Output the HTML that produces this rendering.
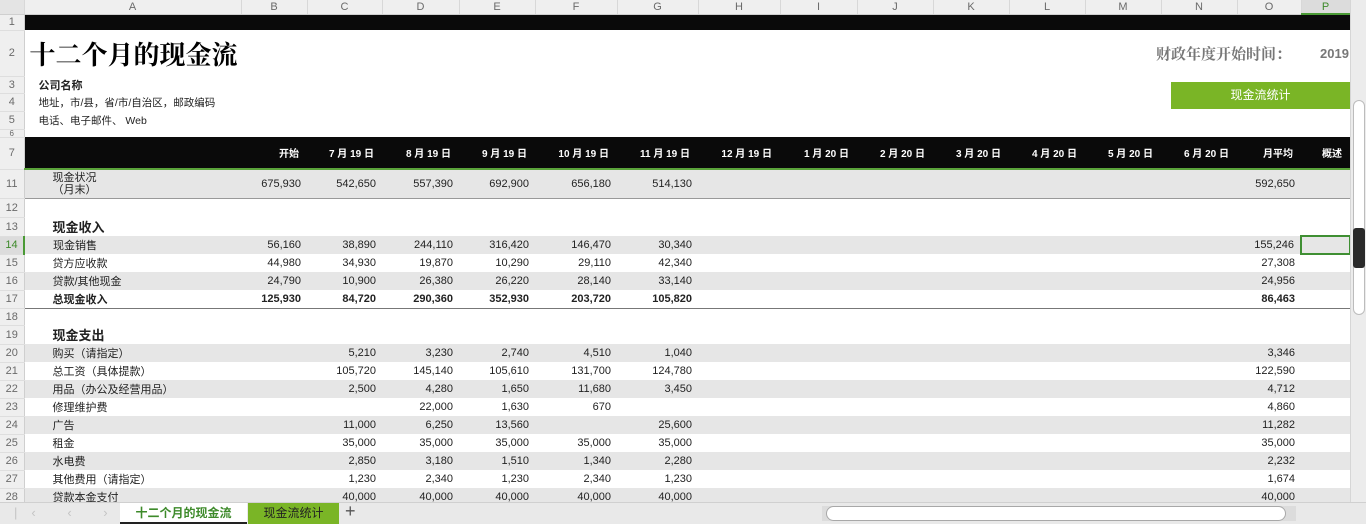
<!DOCTYPE html>
<html><head><meta charset="utf-8"><style>
*{margin:0;padding:0;box-sizing:border-box}
body{width:1366px;height:524px;overflow:hidden;background:#fff;font-family:"Liberation Sans","Noto Sans CJK SC",sans-serif;font-size:11px;color:#222;position:relative}
table{border-collapse:collapse;table-layout:fixed;position:absolute;left:0;top:0;width:1350px}
td{padding:0;white-space:nowrap;overflow:hidden;vertical-align:middle}
td.rh{background:#efefef;color:#6a6a6a;text-align:center;border-right:1px solid #cfcfcf;border-bottom:1px solid #dedede;font-size:11px}
tr.ch td{background:#efefef;color:#6a6a6a;text-align:center;border-right:1px solid #d8d8d8;border-bottom:1px solid #cfcfcf;font-size:11px;height:14px}
td.n{text-align:right;padding-right:6px}
tr.g td:not(.rh){background:#e6e6e6}
tr.hd td:not(.rh){background:#0a0a0a;color:#fff;font-weight:bold;font-size:10px;text-align:right;padding-right:8px;border-bottom:2px solid #5aa33a}
.lb{padding-left:28px}
tr.b td{font-weight:bold}
.sec{font-size:13px;font-weight:bold;padding-left:28px;vertical-align:bottom}
</style></head><body>
<table>
<colgroup><col style="width:24px"><col style="width:217px"><col style="width:66px"><col style="width:75px"><col style="width:77px"><col style="width:76px"><col style="width:82px"><col style="width:81px"><col style="width:82px"><col style="width:77px"><col style="width:76px"><col style="width:76px"><col style="width:76px"><col style="width:76px"><col style="width:76px"><col style="width:64px"><col style="width:49px"></colgroup>
<tr class="ch"><td style="background:#e4e4e4"></td><td>A</td><td>B</td><td>C</td><td>D</td><td>E</td><td>F</td><td>G</td><td>H</td><td>I</td><td>J</td><td>K</td><td>L</td><td>M</td><td>N</td><td>O</td><td style="color:#3d8a2a;border-bottom:2px solid #4a9a35;background:#dcdcdc">P</td></tr>
<tr style="height:16px"><td class="rh">1</td><td colspan="16" style="background:#0a0a0a"></td></tr>
<tr style="height:46px"><td class="rh">2</td><td colspan="9" style="font-family:'Liberation Serif','Noto Serif CJK SC',serif;font-size:26px;font-weight:bold;color:#000;padding-left:5px">十二个月的现金流</td><td colspan="6" style="text-align:right;font-size:15px;font-weight:bold;color:#777;padding-right:10px;font-family:'Liberation Serif','Noto Serif CJK SC',serif">财政年度开始时间：</td><td style="font-size:13px;font-weight:bold;color:#777;padding-left:19px">2019</td></tr>
<tr style="height:17px"><td class="rh">3</td><td style="font-weight:bold;padding-left:14px">公司名称</td><td colspan="15"></td></tr>
<tr style="height:18px"><td class="rh">4</td><td style="padding-left:14px;font-size:10.5px">地址，市/县，省/市/自治区，邮政编码</td><td colspan="15"></td></tr>
<tr style="height:18px"><td class="rh">5</td><td style="padding-left:14px;font-size:10.5px">电话、电子邮件、 Web</td><td colspan="15"></td></tr>
<tr style="height:7px"><td class="rh" style="font-size:8px;line-height:7px">6</td><td colspan="16"></td></tr>
<tr class="hd" style="height:32px"><td class="rh">7</td><td></td><td>开始</td><td>7 月 19 日</td><td>8 月 19 日</td><td>9 月 19 日</td><td>10 月 19 日</td><td>11 月 19 日</td><td>12 月 19 日</td><td>1 月 20 日</td><td>2 月 20 日</td><td>3 月 20 日</td><td>4 月 20 日</td><td>5 月 20 日</td><td>6 月 20 日</td><td>月平均</td><td>概述</td></tr>
<tr class="g" style="height:29px"><td class="rh">11</td><td style="padding-left:28px;line-height:12px;border-bottom:1px solid #999">现金状况<br>（月末）</td><td class="n" style="border-bottom:1px solid #999">675,930</td><td class="n" style="border-bottom:1px solid #999">542,650</td><td class="n" style="border-bottom:1px solid #999">557,390</td><td class="n" style="border-bottom:1px solid #999">692,900</td><td class="n" style="border-bottom:1px solid #999">656,180</td><td class="n" style="border-bottom:1px solid #999">514,130</td><td colspan="7" style="border-bottom:1px solid #999"></td><td class="n" style="border-bottom:1px solid #999">592,650</td><td style="border-bottom:1px solid #999"></td></tr>
<tr style="height:19px"><td class="rh">12</td><td colspan="16"></td></tr>
<tr style="height:18px"><td class="rh">13</td><td class="sec">现金收入</td><td colspan="15"></td></tr>
<tr class="g" style="height:18px"><td class="rh" style="color:#3d8a2a;border-right:2px solid #4a9a35;background:#dcdcdc">14</td><td class="lb">现金销售</td><td class="n">56,160</td><td class="n">38,890</td><td class="n">244,110</td><td class="n">316,420</td><td class="n">146,470</td><td class="n">30,340</td><td colspan="7"></td><td class="n">155,246</td><td style="border:2px solid #3f8f33"></td></tr>
<tr style="height:18px"><td class="rh">15</td><td class="lb">贷方应收款</td><td class="n">44,980</td><td class="n">34,930</td><td class="n">19,870</td><td class="n">10,290</td><td class="n">29,110</td><td class="n">42,340</td><td colspan="7"></td><td class="n">27,308</td><td></td></tr>
<tr class="g" style="height:18px"><td class="rh">16</td><td class="lb">贷款/其他现金</td><td class="n">24,790</td><td class="n">10,900</td><td class="n">26,380</td><td class="n">26,220</td><td class="n">28,140</td><td class="n">33,140</td><td colspan="7"></td><td class="n">24,956</td><td></td></tr>
<tr class="b" style="height:18px"><td class="rh" style="font-weight:normal">17</td><td class="lb" style="border-bottom:1px solid #777">总现金收入</td><td class="n" style="border-bottom:1px solid #777">125,930</td><td class="n" style="border-bottom:1px solid #777">84,720</td><td class="n" style="border-bottom:1px solid #777">290,360</td><td class="n" style="border-bottom:1px solid #777">352,930</td><td class="n" style="border-bottom:1px solid #777">203,720</td><td class="n" style="border-bottom:1px solid #777">105,820</td><td colspan="7" style="border-bottom:1px solid #777"></td><td class="n" style="border-bottom:1px solid #777">86,463</td><td style="border-bottom:1px solid #777"></td></tr>
<tr style="height:17px"><td class="rh">18</td><td colspan="16"></td></tr>
<tr style="height:18px"><td class="rh">19</td><td class="sec">现金支出</td><td colspan="15"></td></tr>
<tr class="g" style="height:18px"><td class="rh">20</td><td class="lb">购买（请指定）</td><td></td><td class="n">5,210</td><td class="n">3,230</td><td class="n">2,740</td><td class="n">4,510</td><td class="n">1,040</td><td colspan="7"></td><td class="n">3,346</td><td></td></tr>
<tr style="height:18px"><td class="rh">21</td><td class="lb">总工资（具体提款）</td><td></td><td class="n">105,720</td><td class="n">145,140</td><td class="n">105,610</td><td class="n">131,700</td><td class="n">124,780</td><td colspan="7"></td><td class="n">122,590</td><td></td></tr>
<tr class="g" style="height:18px"><td class="rh">22</td><td class="lb">用品（办公及经营用品）</td><td></td><td class="n">2,500</td><td class="n">4,280</td><td class="n">1,650</td><td class="n">11,680</td><td class="n">3,450</td><td colspan="7"></td><td class="n">4,712</td><td></td></tr>
<tr style="height:18px"><td class="rh">23</td><td class="lb">修理维护费</td><td></td><td></td><td class="n">22,000</td><td class="n">1,630</td><td class="n">670</td><td></td><td colspan="7"></td><td class="n">4,860</td><td></td></tr>
<tr class="g" style="height:18px"><td class="rh">24</td><td class="lb">广告</td><td></td><td class="n">11,000</td><td class="n">6,250</td><td class="n">13,560</td><td></td><td class="n">25,600</td><td colspan="7"></td><td class="n">11,282</td><td></td></tr>
<tr style="height:18px"><td class="rh">25</td><td class="lb">租金</td><td></td><td class="n">35,000</td><td class="n">35,000</td><td class="n">35,000</td><td class="n">35,000</td><td class="n">35,000</td><td colspan="7"></td><td class="n">35,000</td><td></td></tr>
<tr class="g" style="height:18px"><td class="rh">26</td><td class="lb">水电费</td><td></td><td class="n">2,850</td><td class="n">3,180</td><td class="n">1,510</td><td class="n">1,340</td><td class="n">2,280</td><td colspan="7"></td><td class="n">2,232</td><td></td></tr>
<tr style="height:18px"><td class="rh">27</td><td class="lb">其他费用（请指定）</td><td></td><td class="n">1,230</td><td class="n">2,340</td><td class="n">1,230</td><td class="n">2,340</td><td class="n">1,230</td><td colspan="7"></td><td class="n">1,674</td><td></td></tr>
<tr class="g" style="height:18px"><td class="rh">28</td><td class="lb">贷款本金支付</td><td></td><td class="n">40,000</td><td class="n">40,000</td><td class="n">40,000</td><td class="n">40,000</td><td class="n">40,000</td><td colspan="7"></td><td class="n">40,000</td><td></td></tr>
</table>
<div style="position:absolute;left:1171px;top:82px;width:179px;height:27px;background:#7ab526;color:#fff;font-size:12px;text-align:center;line-height:27px">现金流统计</div>
<div style="position:absolute;left:1350px;top:0;width:16px;height:502px;background:#ececec;border-left:1px solid #d6d6d6">
<div style="position:absolute;left:2px;top:100px;width:12px;height:215px;background:#fff;border:1px solid #bcbcbc;border-radius:6px"></div>
<div style="position:absolute;left:2px;top:228px;width:12px;height:40px;background:#2a2a2a;border-radius:3px"></div>
</div>
<div style="position:absolute;left:0;top:502px;width:1366px;height:22px;background:#e9e9e9;border-top:1px solid #d0d0d0">
<div style="position:absolute;left:14px;top:2px;color:#c4c4c4;font-size:13px;letter-spacing:14px">|‹ ‹ › ›|</div>
<div style="position:absolute;left:120px;top:0;width:127px;height:21px;background:#fff;color:#3d8a2a;font-weight:bold;font-size:12px;text-align:center;line-height:20px;border-bottom:2px solid #222">十二个月的现金流</div>
<div style="position:absolute;left:248px;top:0;width:91px;height:21px;background:#7ab526;color:#222;font-size:12px;text-align:center;line-height:21px">现金流统计</div>
<div style="position:absolute;left:345px;top:-2px;font-size:18px;color:#555">+</div>
<div style="position:absolute;left:822px;top:3px;width:474px;height:15px;background:#dcdcdc"></div>
<div style="position:absolute;left:826px;top:3px;width:460px;height:15px;background:#fff;border:1px solid #a8a8a8;border-radius:8px"></div>
</div>
</body></html>
